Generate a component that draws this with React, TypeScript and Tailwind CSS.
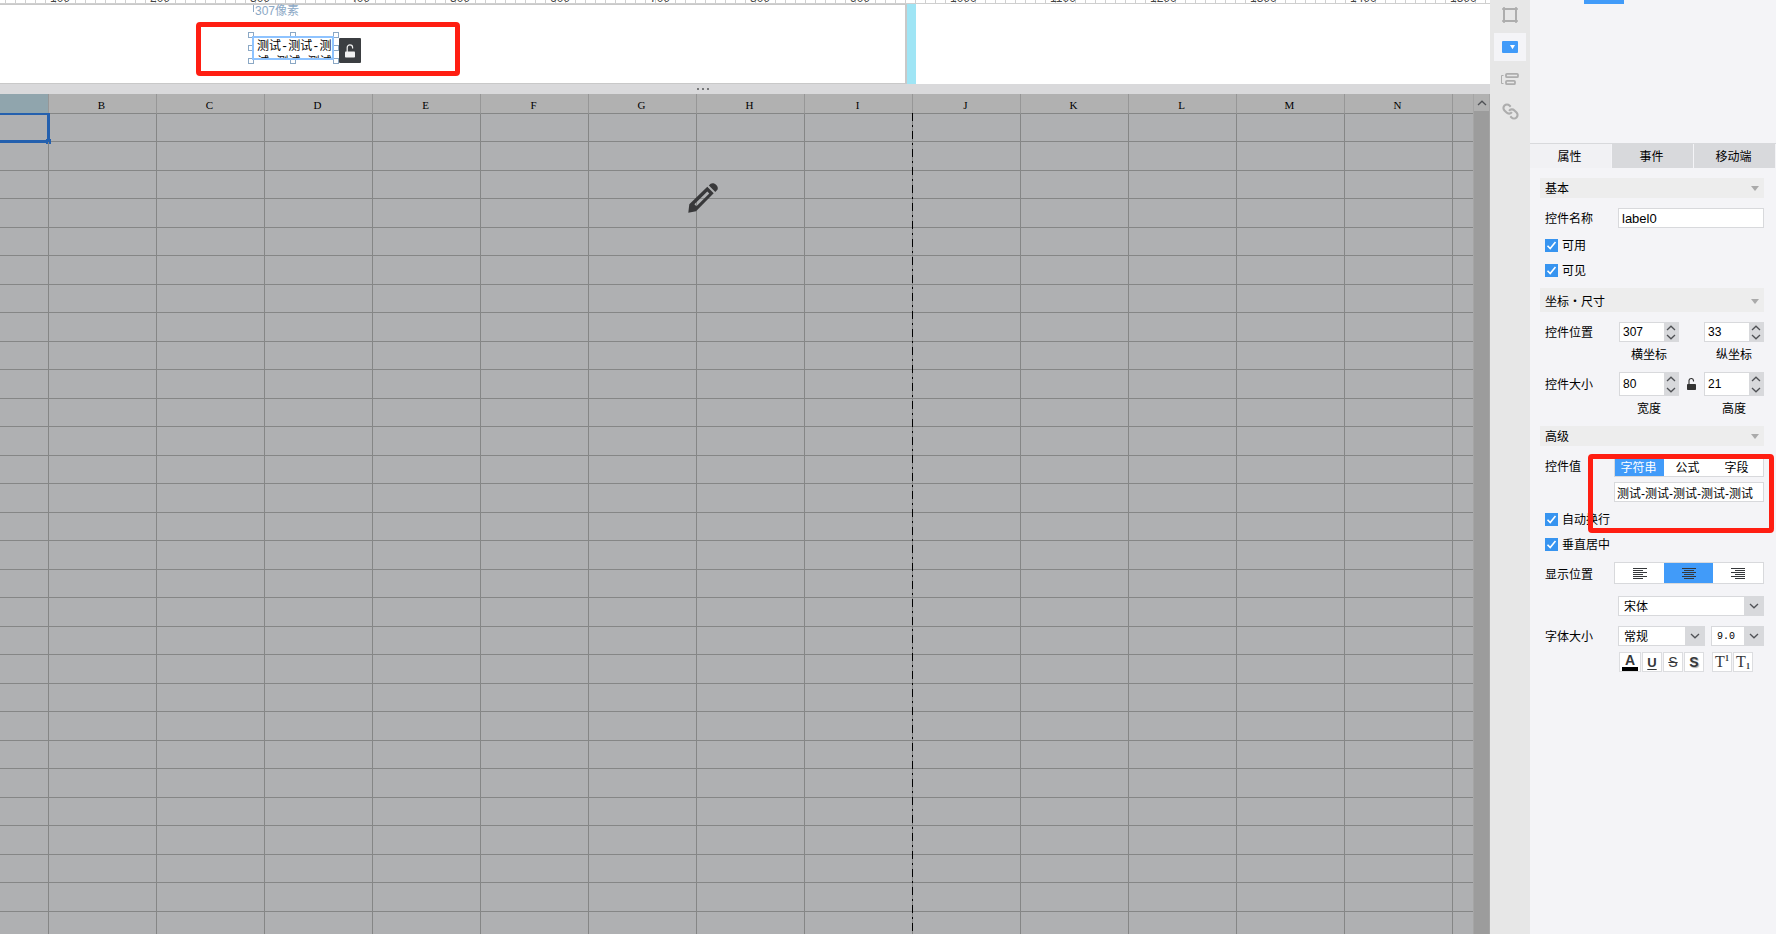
import { useState } from 'react';
import type { ReactNode } from 'react';
import clsx from 'clsx';

const columns = ['B', 'C', 'D', 'E', 'F', 'G', 'H', 'I', 'J', 'K', 'L', 'M', 'N'];
const rows = Array.from({ length: 29 }, (_, i) => i + 1);
const rulerMarks = Array.from({ length: 15 }, (_, i) => (i + 1) * 100);

const handles = [
    'left-[248px] top-[27px]',
    'left-[290px] top-[27px]',
    'left-[333px] top-[27px]',
    'left-[248px] top-[40px]',
    'left-[333px] top-[40px]',
    'left-[248px] top-[53px]',
    'left-[290px] top-[53px]',
    'left-[333px] top-[53px]',
];

function Chevron({ up = false }: { up?: boolean }) {
    return (
        <svg width="10" height="6" viewBox="0 0 10 6" fill="none" stroke="#505256" strokeWidth="1.3">
            <path d={up ? 'M1 5L5 1.2L9 5' : 'M1 1L5 4.8L9 1'} />
        </svg>
    );
}

function Ruler() {
    return (
        <div className="relative h-1 shrink-0 overflow-hidden border-b border-[#cfcfcf] bg-white">
            <svg className="absolute inset-0 h-full w-full">
                <defs>
                    <pattern id="ticks" x="5" width="10" height="4" patternUnits="userSpaceOnUse">
                        <rect width="1" height="4" fill="#cfcfcf" />
                    </pattern>
                </defs>
                <rect width="100%" height="100%" fill="url(#ticks)" />
            </svg>
            <div className="relative flex h-full items-end pl-[50px] text-[12px] leading-[10px] text-[#444]">
                {rulerMarks.map((mark) => (
                    <span key={mark} className="w-[100px] shrink-0">{mark}</span>
                ))}
            </div>
        </div>
    );
}

function FormCanvas() {
    return (
        <div className="flex h-20 shrink-0 bg-white">
            <div className="relative w-[907px] shrink-0 border-t border-r-2 border-b border-[#c9c9c9]">
                <div className="absolute top-0 left-[253px] h-[7px] border-l border-[#8ba8c5] pl-px text-[12px] leading-3 whitespace-nowrap text-[#8ba8c5]">
                    307像素
                </div>

                {/* Selected label widget */}
                {handles.map((pos) => (
                    <span key={pos} className={clsx('absolute size-[6px] border border-[#8ba8c5] bg-white', pos)} />
                ))}
                <div className="absolute top-[31px] left-[252px] h-6 w-[82px] overflow-hidden border-2 border-[#8ec3ff] bg-white pt-px pl-[3px] font-['Liberation_Mono','Noto_Sans_CJK_SC',monospace] text-[12px] leading-4 break-all">
                    测试-测试-测试-测试-测试
                </div>
                <button type="button" aria-label="锁定" className="absolute top-[33px] left-[339px] flex h-[25px] w-[22px] items-center justify-center rounded-[1px] bg-[#3b3e41]">
                    <svg width="10" height="14" viewBox="0 0 10 14" fill="none">
                        <path d="M2.2 8V3.5A2.6 2.6 0 0 1 7.6 3.5V4.5" stroke="#f2f2f2" strokeWidth="1.2" />
                        <rect y="7.5" width="10" height="6" rx=".8" fill="#f2f2f2" />
                    </svg>
                </button>

                <div className="absolute top-[17px] left-[196px] h-[54px] w-[264px] rounded-[4px] border-5 border-[#ff1e12]" />
            </div>
            <div className="w-[9px] shrink-0 bg-[#9fe5f5]" />
        </div>
    );
}

function Sheet() {
    return (
        <div className="flex min-h-0 flex-1 overflow-hidden bg-[#afb0b2]">
            <div className="relative min-w-0 flex-1 overflow-hidden">
                <table className="w-full table-fixed border-separate border-spacing-0">
                    <colgroup>
                        <col className="w-[49px]" />
                        {columns.map((c) => (
                            <col key={c} className="w-[108px]" />
                        ))}
                        <col />
                    </colgroup>
                    <thead>
                        <tr>
                            <th className="h-5 border-r border-b border-r-[#979797] border-b-[#858686] bg-[#90a5ad] p-0" />
                            {columns.map((c) => (
                                <th
                                    key={c}
                                    className="h-5 border-r border-b border-r-[#979797] border-b-[#858686] bg-[#b1b1b1] p-0 pt-1 pr-[2px] font-['Liberation_Serif',serif] text-[11px] leading-[15px] font-normal"
                                >
                                    {c}
                                </th>
                            ))}
                            <th className="h-5 border-b border-[#858686] bg-[#b1b1b1] p-0" />
                        </tr>
                    </thead>
                    <tbody>
                        {rows.map((row) => (
                            <tr key={row} className={row % 2 ? 'h-7' : 'h-[29px]'}>
                                <td className="relative border-r border-b border-[#858686] p-0">
                                    {row === 1 && (
                                        <div className="absolute -top-px -right-0.5 -bottom-0.5 left-0 border-t-2 border-r-3 border-b-3 border-[#2460ae]">
                                            <span className="absolute -right-1 -bottom-1 size-[5px] bg-[#2460ae]" />
                                        </div>
                                    )}
                                </td>
                                {columns.map((c) => (
                                    <td key={c} className="border-r border-b border-[#858686] p-0" />
                                ))}
                                <td className="border-b border-[#858686] p-0" />
                            </tr>
                        ))}
                    </tbody>
                </table>

                {/* Page break */}
                <svg className="absolute top-[19px] left-[912px] h-full w-px">
                    <line x1=".5" x2=".5" y1="0" y2="100%" stroke="#000" strokeDasharray="8 4 2 4" />
                </svg>

                <svg className="absolute top-[89px] left-[688px]" width="31" height="31" viewBox="0 0 31 31">
                    <path fill="#38383a" fillRule="evenodd" d="M.3 29.7L1.3 21.3L19.3 3.7L25.7 10.3L8 28.3ZM6.4 21.2L8.4 23.2L21.3 10.4L19.3 8.4Z" />
                    <path fill="#38383a" d="M20.9 2.4L22.6.8C24 .1 26 0 27.8 1.6C29.7 3.2 30.2 5.1 29.6 6.6L27.3 8.9Z" />
                </svg>
            </div>
            <div className="flex w-[17px] shrink-0 flex-col border-x border-[#a5a5a5] bg-[#9c9c9c]">
                <button type="button" aria-label="向上滚动" className="flex h-[17px] items-center justify-center bg-[#b1b1b1]">
                    <Chevron up />
                </button>
            </div>
        </div>
    );
}

function IconStrip() {
    const button = 'flex h-7 w-8 items-center justify-center';
    return (
        <nav className="flex w-10 shrink-0 flex-col items-center gap-1 bg-[#e7e7e7] pt-px">
            <button type="button" aria-label="单元格" className={button}>
                <svg width="16" height="16" viewBox="0 0 16 16" fill="none" stroke="#adadad">
                    <rect x="2" y="2" width="12" height="12" strokeWidth="2" />
                    <path d="M0 2H2M14 2H16M0 14H2M14 14H16M2 0V2M14 0V2M2 14V16M14 14V16" strokeWidth="1.6" />
                </svg>
            </button>
            <button type="button" aria-label="控件" className={clsx(button, 'bg-[#f4f4f7]')}>
                <svg width="16" height="12" viewBox="0 0 16 12">
                    <rect width="16" height="12" rx="1" fill="#419bf9" />
                    <path d="M8 4H13L10.5 8.2Z" fill="#fff" />
                </svg>
            </button>
            <button type="button" aria-label="结构" className={button}>
                <svg width="18" height="14" viewBox="0 0 18 14" fill="none" stroke="#adadad">
                    <path d="M2.5 3.5H.5V11.5H2.5" />
                    <rect x="5" y="1.8" width="12" height="3.4" rx="1" strokeWidth="1.8" />
                    <rect x="5" y="8.8" width="9" height="3.4" rx="1" strokeWidth="1.8" />
                </svg>
            </button>
            <button type="button" aria-label="超级链接" className={button}>
                <svg width="17" height="17" viewBox="0 0 24 24" fill="none" stroke="#adadad" strokeWidth="3">
                    <g transform="matrix(-1 0 0 1 24 0)">
                        <path d="M10 13a5 5 0 0 0 7.54.54l3-3a5 5 0 0 0-7.07-7.07l-1.72 1.71" />
                        <path d="M14 11a5 5 0 0 0-7.54-.54l-3 3a5 5 0 0 0 7.07 7.07l1.71-1.71" />
                    </g>
                </svg>
            </button>
        </nav>
    );
}

function SectionHeader({ title, tall = false }: { title: string; tall?: boolean }) {
    return (
        <button
            type="button"
            className={clsx(
                "flex items-center justify-between bg-[#ededed] px-[5px] font-['Noto_Sans_CJK_SC',sans-serif]",
                tall ? 'h-6 pt-0.5' : 'h-5',
            )}
        >
            {title}
            <svg width="8" height="5" viewBox="0 0 8 5">
                <path d="M0 0H8L4 5Z" fill="#aaa" />
            </svg>
        </button>
    );
}

function Row({ label, htmlFor, tall = false, children }: { label?: string; htmlFor?: string; tall?: boolean; children: ReactNode }) {
    return (
        <div className="flex items-start pl-[5px]">
            <div className={clsx('flex w-[69px] shrink-0 items-center pt-0.5', tall ? 'h-6' : 'h-5')}>
                {label && <label htmlFor={htmlFor}>{label}</label>}
            </div>
            <div className="min-w-0 flex-1">{children}</div>
        </div>
    );
}

function Check({ label }: { label: string }) {
    return (
        <label className="flex h-[15px] items-center gap-1 pl-[5px]">
            <span className="relative size-[13px]">
                <input type="checkbox" defaultChecked className="peer block size-[13px] appearance-none border border-[#3794f0] bg-white checked:bg-[#3794f0]" />
                <svg className="pointer-events-none absolute inset-0 opacity-0 peer-checked:opacity-100" width="13" height="13" viewBox="0 0 13 13" fill="none" stroke="#fff" strokeWidth="1.6">
                    <path d="M2.5 6.8L5.2 9.6L10.5 3" />
                </svg>
            </span>
            {label}
        </label>
    );
}

function Spinner({ id, value, caption, tall = false }: { id: string; value: string; caption: string; tall?: boolean }) {
    return (
        <div className="flex w-[60px] flex-col items-center gap-[6px]">
            <div className={clsx('flex w-full border border-[#d8d9dc] bg-white', tall ? 'h-6' : 'h-5')}>
                <input id={id} defaultValue={value} className="w-0 flex-1 pl-[3px] font-['Liberation_Sans',sans-serif] text-[12px] outline-none" />
                <div className="flex w-[14px] flex-col bg-[#d8d9dc]">
                    <button type="button" aria-label={caption + '增加'} className="flex flex-1 items-center justify-center">
                        <Chevron up />
                    </button>
                    <button type="button" aria-label={caption + '减少'} className="flex flex-1 items-center justify-center">
                        <Chevron />
                    </button>
                </div>
            </div>
            <label htmlFor={id} className="leading-[14px]">{caption}</label>
        </div>
    );
}

function Select({ id, value, label, className }: { id?: string; value: string; label: string; className?: string }) {
    return (
        <div className={clsx('relative h-5', className)}>
            <select id={id} aria-label={label} className="h-full w-full appearance-none border border-[#d8d9dc] bg-white pt-px pr-5 pl-[5px] outline-none">
                <option>{value}</option>
            </select>
            <span className="pointer-events-none absolute inset-y-0 right-0 flex w-5 items-center justify-center bg-[#d8d9dc]">
                <Chevron />
            </span>
        </div>
    );
}

function AlignIcon({ short }: { short: string }) {
    return (
        <svg width="14" height="11" viewBox="0 0 14 11" stroke="#35373a" shapeRendering="crispEdges">
            <path d={'M0 .5H14M0 4.5H14M0 8.5H14' + short} />
        </svg>
    );
}

const alignments = [
    { name: '左对齐', short: 'M0 2.5H10M0 6.5H10M0 10.5H10' },
    { name: '居中', short: 'M2 2.5H12M2 6.5H12M2 10.5H12' },
    { name: '右对齐', short: 'M4 2.5H14M4 6.5H14M4 10.5H14' },
];

function FontButtons() {
    const button = 'flex h-5 w-5 items-center justify-center border border-[#dcdde0] bg-white text-[#35373a]';
    return (
        <div className="flex gap-px pl-px font-['Liberation_Sans',sans-serif] text-[14px] leading-none font-bold">
            <button type="button" aria-label="字体颜色" className={clsx(button, 'w-[22px] flex-col')}>
                <span className="leading-[13px]">A</span>
                <span className="h-1 w-4 bg-black" />
            </button>
            <button type="button" className={clsx(button, 'text-[13px] underline underline-offset-2')}>U</button>
            <button type="button" className={clsx(button, 'font-normal line-through')}>S</button>
            <button type="button" className={clsx(button, 'text-shadow-[1px_1px_1px_#aaa]')}>S</button>
            <button type="button" className={clsx(button, "ml-[7px] font-['Liberation_Serif',serif] text-[16px] font-normal")}>
                T<sup className="self-start pt-[6px] text-[8px] leading-none font-bold">1</sup>
            </button>
            <button type="button" className={clsx(button, "font-['Liberation_Serif',serif] text-[16px] font-normal")}>
                T<sub className="self-end pb-0.5 text-[8px] leading-none font-bold">1</sub>
            </button>
        </div>
    );
}

function PropertyPanel() {
    const [tab, setTab] = useState('属性');
    const [kind, setKind] = useState('字符串');
    const [align, setAlign] = useState('居中');

    return (
        <aside className="flex w-[246px] shrink-0 flex-col bg-[#f4f4f7]">
            <div className="h-[143px] shrink-0 pl-[54px]">
                <div className="h-1 w-10 bg-[#419bf9]" />
            </div>

            <div className="flex gap-px border-t border-[#d8d9dc] pr-px">
                {['属性', '事件', '移动端'].map((name) => (
                    <button
                        key={name}
                        type="button"
                        onClick={() => setTab(name)}
                        className={clsx('h-6 flex-1 pt-0.5 pr-0.5', tab === name ? 'bg-[#f1f1f4]' : 'bg-[#d8d9dc]')}
                    >
                        {name}
                    </button>
                ))}
            </div>

            <div className="flex flex-col gap-2.5 pt-2.5 pr-3 pl-2.5">
                <SectionHeader title="基本" />
                <Row label="控件名称" htmlFor="name">
                    <div className="pl-1">
                        <input id="name" defaultValue="label0" className="block h-5 w-full border border-[#d8d9dc] bg-white pl-[3px] font-['Liberation_Sans',sans-serif] text-[13px] outline-none" />
                    </div>
                </Row>
                <Check label="可用" />
                <Check label="可见" />

                <SectionHeader title="坐标·尺寸" tall />
                <Row label="控件位置" htmlFor="x">
                    <div className="flex justify-between pl-[5px]">
                        <Spinner id="x" value="307" caption="横坐标" />
                        <Spinner id="y" value="33" caption="纵坐标" />
                    </div>
                </Row>
                <Row label="控件大小" htmlFor="width" tall>
                    <div className="flex justify-between pl-[5px]">
                        <Spinner id="width" value="80" caption="宽度" tall />
                        <button type="button" aria-label="锁定宽高比" className="flex h-6 items-center">
                            <svg width="9" height="12" viewBox="0 0 9 12" fill="none">
                                <path d="M2 7V3A2.2 2.2 0 0 1 6.5 2.6V3.4" stroke="#333" strokeWidth="1.1" />
                                <rect y="6" width="9" height="6" rx=".8" fill="#333" />
                            </svg>
                        </button>
                        <Spinner id="height" value="21" caption="高度" tall />
                    </div>
                </Row>

                <SectionHeader title="高级" />
                <Row label="控件值" htmlFor="value">
                    <div className="relative flex flex-col gap-[5px]">
                        <div className="flex h-[21px] border border-[#d8d9dc] bg-white pr-px">
                            {['字符串', '公式', '字段'].map((name) => (
                                <button
                                    key={name}
                                    type="button"
                                    onClick={() => setKind(name)}
                                    className={clsx('flex-1 pt-0.5 pr-0.5', kind === name && 'bg-[#419bf9] text-white')}
                                >
                                    {name}
                                </button>
                            ))}
                        </div>
                        <input id="value" defaultValue="测试-测试-测试-测试-测试" className="h-5 w-full border border-[#d8d9dc] bg-white pl-0.5 outline-none" />
                        <div className="pointer-events-none absolute -top-0.5 -right-2.5 -left-[26px] z-10 h-[79px] rounded-[4px] border-5 border-[#ff1e12]" />
                    </div>
                </Row>
                <Check label="自动换行" />
                <Check label="垂直居中" />
                <Row label="显示位置" tall>
                    <div className="flex h-[22px] border border-[#d8d9dc] bg-white pr-px">
                        {alignments.map(({ name, short }) => (
                            <button
                                key={name}
                                type="button"
                                aria-label={name}
                                onClick={() => setAlign(name)}
                                className={clsx('flex flex-1 items-center justify-center', align === name && 'bg-[#419bf9]')}
                            >
                                <AlignIcon short={short} />
                            </button>
                        ))}
                    </div>
                </Row>
                <Row>
                    <div className="pl-1">
                        <Select label="字体" value="宋体" />
                    </div>
                </Row>
                <Row label="字体大小" htmlFor="style">
                    <div className="flex flex-col gap-[6px] pl-1">
                        <div className="flex gap-[6px]">
                            <Select id="style" label="字形" value="常规" className="flex-1" />
                            <Select label="字号" value="9.0" className="w-[53px] font-['Liberation_Mono',monospace] text-[10px]" />
                        </div>
                        <FontButtons />
                    </div>
                </Row>
            </div>
        </aside>
    );
}

export default function App() {
    return (
        <div className="flex h-screen overflow-hidden font-['Liberation_Sans','Noto_Sans_CJK_SC',sans-serif] text-[12px] leading-4 text-black">
            <main className="flex min-w-0 flex-1 flex-col">
                <Ruler />
                <FormCanvas />
                <div className="flex h-2.5 shrink-0 items-center justify-center gap-[3px] bg-[#d9d9db] pr-[84px]">
                    <span className="size-0.5 bg-[#77787a]" />
                    <span className="size-0.5 bg-[#77787a]" />
                    <span className="size-0.5 bg-[#77787a]" />
                </div>
                <Sheet />
            </main>
            <IconStrip />
            <PropertyPanel />
        </div>
    );
}
